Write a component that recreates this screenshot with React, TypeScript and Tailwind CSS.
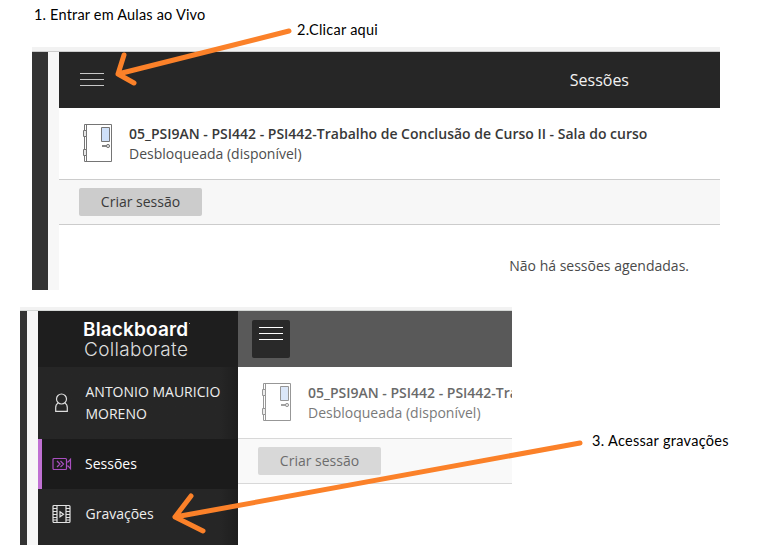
import React from 'react';

const sans = "font-['Open_Sans','Noto_Sans',sans-serif]";

function Door() {
  return (
    <svg width="32" height="40" viewBox="0 0 32 40" fill="none" stroke="#757575" className="shrink-0">
      <path d="M2.5 1.5h27v37h-27zM4.5 1.5v37" />
      <path d="M1.5 7.5h3v6h-3zM1.5 26.5h3v6h-3z" fill="#e6e6e6" />
      <path d="M19.5 4.5h8v14h-8z" fill="#cfe0f8" />
      <path d="M20 23h5" strokeWidth="1.8" />
      <circle cx="26" cy="23" r="1.6" fill="#ddd" />
    </svg>
  );
}

function Lines({ color }: { color: string }) {
  return (
    <svg width="24" height="14" viewBox="0 0 24 14" stroke={color}>
      <path d="M0 .5h24M0 6.5h24M0 12.5h24" />
    </svg>
  );
}

function Room() {
  return (
    <div className="flex h-[72px] border-b border-[#ccc] bg-white pl-[23px] pt-[15px]">
      <Door />
      <div className="ml-[15px] mt-px whitespace-nowrap text-[14px] leading-[20px] text-[#4d4d4d]">
        <div className="font-semibold tracking-[-0.005px] text-[#383838]">05_PSI9AN - PSI442 - PSI442-Trabalho de Conclusão de Curso II - Sala do curso</div>
        <div>Desbloqueada (disponível)</div>
      </div>
    </div>
  );
}

function Toolbar() {
  return (
    <div className="flex h-[45px] items-start border-b border-[#ccc] bg-[#f7f7f7] pl-5 pt-2">
      <button className="h-7 w-[123px] rounded-[2px] bg-[#ccc] text-[14px] leading-7 text-[#3a3a3a]">Criar sessão</button>
    </div>
  );
}

function SessionsShot() {
  return (
    <section className="ml-8 flex h-[243px] w-[688px] flex-col">
      <div className="h-[5px] shrink-0 border-b border-[#ccc] bg-[#f2f2f2]" />
      <div className="flex flex-1">
        <div className="w-4 bg-[#333]" />
        <div className="w-[11px] bg-[#f7f7f7]" />
        <main className="flex-1">
          <header className="flex h-14 items-center justify-between bg-[#262626] pl-[21px] pr-[91px] text-[16px] text-[#f2f2f2]">
            <Lines color="#c8c8c8" />
            <span className="font-medium">Sessões</span>
          </header>
          <Room />
          <Toolbar />
          <p className="pr-[31px] pt-[30px] text-right text-[14px] leading-[22px] text-[#4a4a4a]">Não há sessões agendadas.</p>
        </main>
      </div>
    </section>
  );
}

function Sidebar() {
  return (
    <aside className="flex w-[200px] flex-col bg-gradient-to-r from-[#262626] from-[91%] to-[#1e1e1e] text-[14px] text-[#eee]">
      <div className="h-14 bg-[#1e1e1e] pl-[45px] pt-[9px] text-white">
        <div className="flex h-5 font-['Inter',sans-serif] text-[19px] font-semibold leading-[19px] tracking-[0.15px]">
          Blackboard<i className="ml-px mt-[3px] size-px bg-[#aaa]" />
        </div>
        <div className="ml-px h-[19px] font-['Inter',sans-serif] text-[19px] font-light leading-[19px] tracking-[0.3px] text-[#ddd]">Collaborate</div>
      </div>
      <div className="flex h-[72px] items-center pl-[17px]">
        <svg width="13" height="20" viewBox="0 0 13 20" fill="none" stroke="#ddd" strokeWidth="1.2">
          <circle cx="6.5" cy="6" r="5" />
          <path d="M3.2 10C1.4 11 .7 12.5.7 14.5v3.8h11.6v-3.8c0-2-.7-3.5-2.5-4.5" />
        </svg>
        <div className="ml-[17.5px] leading-[22px]">ANTONIO MAURICIO<br />MORENO</div>
      </div>
      <div className="flex h-[50px] items-center border-l-4 border-[#c071d3] bg-[#1b1b1b] pl-[10px] text-white">
        <svg width="20" height="14" viewBox="0 0 20 14" fill="none" stroke="#a94fc0" strokeWidth="1.2">
          <rect x="1" y="1.5" width="13.5" height="11" rx="1" />
          <path d="m5 4 3 3-3 3M8.5 4l3 3-3 3M14.5 5h1.7l2.3-2.7v9.4L16.2 9h-1.7" />
        </svg>
        <span className="mb-[2px] ml-[13px]">Sessões</span>
      </div>
      <div className="flex h-[50px] items-center pl-[14px]">
        <svg width="20" height="20" viewBox="0 0 20 20" fill="none" stroke="#e2e2e2" strokeWidth="1.2">
          <rect x="1" y="1.5" width="17" height="17" rx="1" />
          <path d="M5 1.5v17M14 1.5v17M1 4.5h4M1 7.5h4M1 10.5h4M1 13.5h4M1 16h4M14 4.5h4M14 7.5h4M14 10.5h4M14 13.5h4M14 16h4" />
          <path d="m8 7.8 3.5 2.5L8 12.8z" />
        </svg>
        <span className="mb-[2px] ml-[13.5px]">Gravações</span>
      </div>
    </aside>
  );
}

function MenuShot() {
  return (
    <section className="ml-5 mt-[17px] flex h-[238px] w-[492px] flex-col">
      <div className="h-1 shrink-0 border-b border-[#d5d8d6] bg-[#f2f2f2]" />
      <div className="flex flex-1">
        <div className="w-[7px] bg-[#333]" />
        <div className="w-[11px] bg-[#f7f7f7]" />
        <Sidebar />
        <main className="min-w-0 flex-1 overflow-hidden">
          <header className="h-14 bg-[#595959] pl-[14px] pt-[9px]">
            <button className="flex size-[38px] justify-center rounded-[2px] bg-[#292929] pt-[7px]"><Lines color="#fff" /></button>
          </header>
          <div className="opacity-75">
            <Room />
            <Toolbar />
          </div>
        </main>
      </div>
    </section>
  );
}

export default function App() {
  return (
    <div className={`relative h-[545px] w-[768px] overflow-hidden bg-white pt-[47px] ${sans}`}>
      <SessionsShot />
      <MenuShot />
      <svg className="absolute inset-0" width="768" height="545" fill="none" stroke="#fb8129" strokeWidth="5" strokeLinecap="round" strokeLinejoin="round">
        <path d="M289 31 118 74M124 55l-6 19 16 9" />
        <path d="M580 443 175 517M191 496l-16 21 28 14" />
      </svg>
      <div className="font-['Lato',sans-serif] text-[14.5px] leading-5 text-black">
        <span className="absolute left-[34px] top-[5px] whitespace-nowrap tracking-[0.19px]">1. Entrar em Aulas ao Vivo</span>
        <span className="absolute left-[297px] top-[20px] whitespace-nowrap tracking-[0.25px]">2.Clicar aqui</span>
        <span className="absolute left-[592px] top-[431px] whitespace-nowrap tracking-[0.3px]">3. Acessar gravações</span>
      </div>
    </div>
  );
}
